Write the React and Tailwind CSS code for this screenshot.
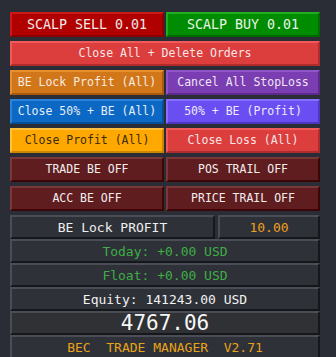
const mono = "font-['DejaVu_Sans_Mono','Liberation_Mono',monospace]";

function Btn({ tone, children, size = "text-[11.5px]" }) {
  return (
    <div
      className={`flex h-[25px] flex-1 items-center justify-center border-2 leading-none ${size} ${tone}`}
    >
      {children}
    </div>
  );
}

function InfoBox({ className = "", children }) {
  return (
    <div
      className={`flex h-[24px] items-center justify-center border-2 border-t-[#4a4d56] border-l-[#4a4d56] border-b-[#15171b] border-r-[#15171b] bg-[#2e3137] leading-none ${className}`}
    >
      {children}
    </div>
  );
}

const sell = "bg-[#b00000] border-t-[#cc1a1a] border-l-[#cc1a1a] border-b-[#8a0000] border-r-[#8a0000] text-[#f4eaea]";
const buy = "bg-[#008c00] border-t-[#20ad20] border-l-[#20ad20] border-b-[#006a00] border-r-[#006a00] text-[#eaf4ea]";
const red = "bg-[#dc3d3d] border-t-[#f05a5a] border-l-[#f05a5a] border-b-[#b02c2c] border-r-[#b02c2c] text-[#f6e6e6]";
const orange = "bg-[#d2761a] border-t-[#e8902e] border-l-[#e8902e] border-b-[#a85a0e] border-r-[#a85a0e] text-[#f6ece0]";
const purple = "bg-[#7a3db2] border-t-[#9055c8] border-l-[#9055c8] border-b-[#5c2a8a] border-r-[#5c2a8a] text-[#efe6f6]";
const blue = "bg-[#0b68c4] border-t-[#2a84dc] border-l-[#2a84dc] border-b-[#084f96] border-r-[#084f96] text-[#e6eef6]";
const violet = "bg-[#6a4ef2] border-t-[#8670ff] border-l-[#8670ff] border-b-[#4e36c0] border-r-[#4e36c0] text-[#eeeafc]";
const amber = "bg-[#ffa800] border-t-[#ffc040] border-l-[#ffc040] border-b-[#cc8600] border-r-[#cc8600] text-[#3a2a08]";
const maroon = "bg-[#601d1f] border-t-[#7a3838] border-l-[#7a3838] border-b-[#3c0606] border-r-[#3c0606] text-[#f2eeee]";

export default function App() {
  return (
    <div className={`min-h-[357px] w-[336px] bg-[#2a2d35] px-[10px] pt-[12px] ${mono}`}>
      <div className="flex w-[310px] flex-col gap-[4px]">
        <div className="flex gap-[2px]">
          <Btn tone={sell} size="text-[13.3px]">SCALP SELL 0.01</Btn>
          <Btn tone={buy} size="text-[13.3px]">SCALP BUY 0.01</Btn>
        </div>
        <div className="flex">
          <Btn tone={red}>Close All + Delete Orders</Btn>
        </div>
        <div className="flex gap-[2px]">
          <Btn tone={orange}>BE Lock Profit (All)</Btn>
          <Btn tone={purple}>Cancel All StopLoss</Btn>
        </div>
        <div className="flex gap-[2px]">
          <Btn tone={blue}>Close 50% + BE (All)</Btn>
          <Btn tone={violet}>50% + BE (Profit)</Btn>
        </div>
        <div className="flex gap-[2px]">
          <Btn tone={amber}>Close Profit (All)</Btn>
          <Btn tone={red}>Close Loss (All)</Btn>
        </div>
        <div className="flex gap-[2px]">
          <Btn tone={maroon}>TRADE BE OFF</Btn>
          <Btn tone={maroon}>POS TRAIL OFF</Btn>
        </div>
        <div className="flex gap-[2px]">
          <Btn tone={maroon}>ACC BE OFF</Btn>
          <Btn tone={maroon}>PRICE TRAIL OFF</Btn>
        </div>
        <div className="flex flex-col">
          <div className="flex gap-[3px]">
            <InfoBox className="w-[205px] text-[13px] text-[#eeeeee]">BE Lock PROFIT</InfoBox>
            <InfoBox className="flex-1 text-[13px] text-[#f0a020]">10.00</InfoBox>
          </div>
          <InfoBox className="text-[13px] text-[#3fae46]">Today: +0.00 USD</InfoBox>
          <InfoBox className="text-[13px] text-[#3fae46]">Float: +0.00 USD</InfoBox>
          <InfoBox className="text-[13px] text-[#f2f2f2]">Equity: 141243.00 USD</InfoBox>
          <InfoBox className="bg-[#2f3134] text-[21px] text-[#f6f6f6]">4767.06</InfoBox>
          <InfoBox className="whitespace-pre text-[13px] text-[#e9a21a]">BEC  TRADE MANAGER  V2.71</InfoBox>
        </div>
      </div>
    </div>
  );
}
